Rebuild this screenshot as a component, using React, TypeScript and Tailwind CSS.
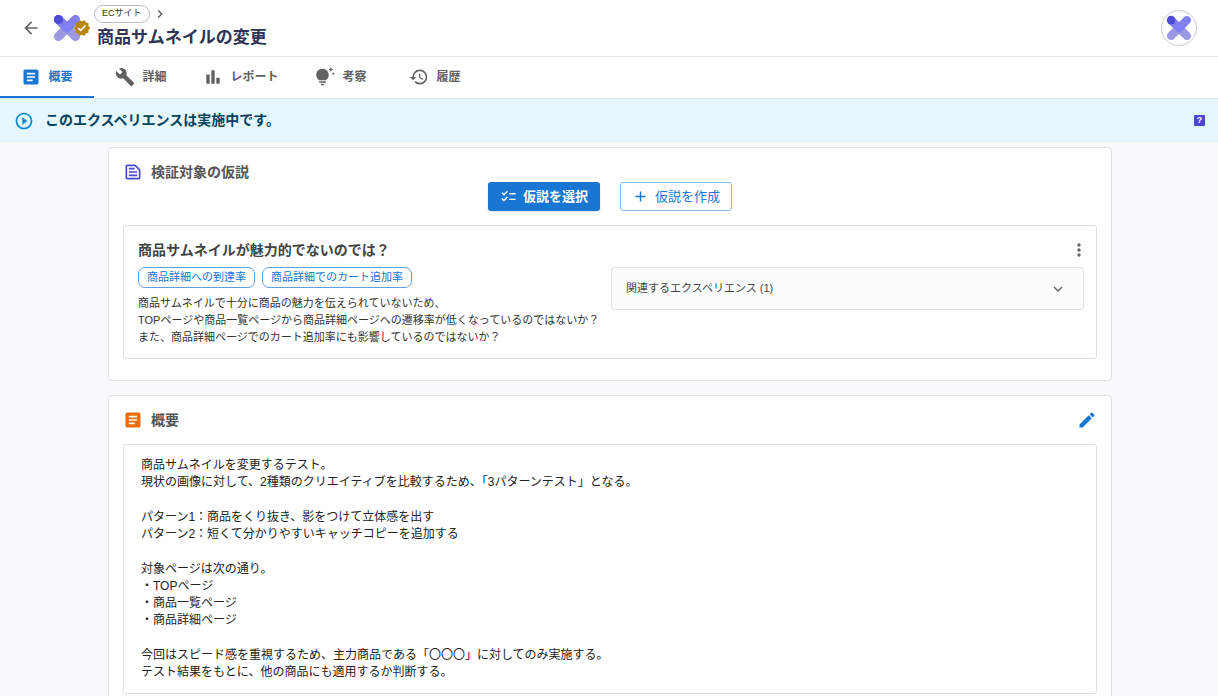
import { ReactNode, useState } from "react";
import {
  MdAdd, MdArrowBack, MdArticle, MdBarChart, MdBuild, MdChecklist, MdChevronRight, MdEdit, MdExpandMore,
  MdHistory, MdMoreVert, MdOutlineTextSnippet, MdPlayCircleOutline, MdTipsAndUpdates, MdVerified,
} from "react-icons/md";

const TABS = [
  { id: "overview", label: "概要", icon: MdArticle, className: "w-[94px]" },
  { id: "detail", label: "詳細", icon: MdBuild, className: "w-[94px]" },
  { id: "report", label: "レポート", icon: MdBarChart, className: "w-[106px]" },
  { id: "insight", label: "考察", icon: MdTipsAndUpdates, className: "w-[94px]" },
  { id: "history", label: "履歴", icon: MdHistory, className: "w-[94px]" },
];

const METRICS = ["商品詳細への到達率", "商品詳細でのカート追加率"];

const HYPOTHESIS = [
  "商品サムネイルで十分に商品の魅力を伝えられていないため、",
  "TOPページや商品一覧ページから商品詳細ページへの遷移率が低くなっているのではないか？",
  "また、商品詳細ページでのカート追加率にも影響しているのではないか？",
];

const OVERVIEW = [
  ["商品サムネイルを変更するテスト。", "現状の画像に対して、2種類のクリエイティブを比較するため、「3パターンテスト」となる。"],
  ["パターン1：商品をくり抜き、影をつけて立体感を出す", "パターン2：短くて分かりやすいキャッチコピーを追加する"],
  ["対象ページは次の通り。", "・TOPページ", "・商品一覧ページ", "・商品詳細ページ"],
  ["今回はスピード感を重視するため、主力商品である「〇〇〇」に対してのみ実施する。", "テスト結果をもとに、他の商品にも適用するか判断する。"],
];

function Logo({ className }: { className: string }) {
  return (
    <svg viewBox="0 0 28 28" fill="none" strokeWidth="9" strokeLinecap="round" className={className} aria-hidden="true">
      <path d="M5.5 22.5 14 14l8.5 8.5" stroke="#9a98e2" />
      <path d="M5.5 5.5 14 14l8.5-8.5" stroke="#8080f2" strokeLinejoin="round" />
      <circle cx="5.5" cy="5.5" r="4.6" fill="#4f4bd6" />
    </svg>
  );
}

function Card({ children }: { children: ReactNode }) {
  return <section className="rounded border border-[#e0e0e0] bg-white px-3.5 pt-3.5 pb-[21px]">{children}</section>;
}

export default function App() {
  const [tab, setTab] = useState("overview");
  const [open, setOpen] = useState(false);

  return (
    <div className="min-h-screen bg-[#f7f9fb] font-['Liberation_Sans','Noto_Sans_CJK_JP',sans-serif] text-[#333]">

      {/* Header */}
      <header className="flex h-[57px] items-center justify-between border-b border-[#e4e4e7] bg-white pr-[21px] pl-[21px]">
        <div className="flex items-center">
          <button aria-label="戻る" className="text-[#666]">
            <MdArrowBack className="h-5 w-5" />
          </button>
          <div className="relative ml-3 w-7">
            <Logo className="h-7 w-7" />
            <MdVerified className="absolute top-[5px] left-5 h-[18px] w-[18px] text-[#b8860b]" />
          </div>
          <div className="ml-[13px]">
            <div className="flex items-center gap-0.5">
              <span className="flex h-[18px] items-center rounded-full border border-[#bdbdbd] px-[7px] text-[9px]">ECサイト</span>
              <MdChevronRight className="h-4 w-4 text-[#555]" />
            </div>
            <h1 className="ml-[3px] pt-px text-[17px] leading-7 font-bold text-[#2e3556]">商品サムネイルの変更</h1>
          </div>
        </div>
        <button aria-label="アカウント" className="flex h-9 w-9 items-center justify-center rounded-full border border-[#c8c8d0] bg-white">
          <Logo className="h-[26px] w-[26px]" />
        </button>
      </header>

      {/* Tabs */}
      <nav role="tablist" className="flex h-[42px] border-b border-[#e0e4e8] bg-white">
        {TABS.map(({ id, label, icon: Icon, className }) => (
          <button
            key={id}
            role="tab"
            aria-selected={tab === id}
            onClick={() => setTab(id)}
            className={`${className} flex items-center justify-center gap-[7px] border-b-2 text-[12px] font-bold whitespace-nowrap ${
              tab === id ? "border-[#1976d2] text-[#1976d2]" : "border-transparent text-[#616161]"
            }`}
          >
            <Icon className="h-5 w-5 shrink-0" />
            {label}
          </button>
        ))}
      </nav>

      {/* Status */}
      <div className="flex h-[43px] items-center bg-[#e5f6fd] pr-[13px] pl-3.5 text-[#014361]">
        <MdPlayCircleOutline className="h-5 w-5 text-[#0288d1]" />
        <p className="ml-[11px] pb-0.5 text-[14px] leading-5 font-bold">このエクスペリエンスは実施中です。</p>
        <button aria-label="ヘルプ" className="ml-auto h-[11px] w-[11px] rounded-[1px] bg-[#4b48d0] text-center text-[9px] leading-[11px] font-bold text-white">?</button>
      </div>

      <main className="mx-auto flex max-w-[1006px] flex-col gap-3.5 pt-[5px] pb-5 pl-0.5">

        {/* Hypothesis */}
        <Card>
          <h2 className="flex items-center gap-2 text-[14px] leading-5 font-bold text-[#555]">
            <MdOutlineTextSnippet className="h-5 w-5 text-[#4b48d0]" />
            検証対象の仮説
          </h2>
          <div className="flex justify-center gap-5">
            <button className="flex h-[29px] w-28 items-center justify-center gap-1.5 rounded-[3px] bg-[#1976d2] text-[13px] font-bold text-white shadow">
              <MdChecklist className="h-[17px] w-[17px]" />
              仮説を選択
            </button>
            <button className="flex h-[29px] w-28 items-center justify-center gap-1.5 rounded-[3px] border border-[#8cbae8] text-[13px] text-[#1976d2]">
              <MdAdd className="h-[17px] w-[17px]" />
              仮説を作成
            </button>
          </div>

          <div className="mt-3.5 rounded-[3px] border border-[#e0e0e0] pt-3.5 pr-3 pb-3 pl-3.5">
            <div className="flex items-center justify-between">
              <h3 className="text-[14px] leading-5 font-bold text-[#444]">商品サムネイルが魅力的でないのでは？</h3>
              <button aria-label="メニュー" className="-mr-[5px] text-[#666]">
                <MdMoreVert className="h-5 w-5" />
              </button>
            </div>
            <div className="mt-[7px] grid grid-cols-2 items-start">
              <div>
                <div className="flex gap-[7px]">
                  {METRICS.map((m) => (
                    <span key={m} className="flex h-[21px] items-center rounded-[7px] border border-[#5f9fe0] px-2 text-[11px] whitespace-nowrap text-[#1976d2]">{m}</span>
                  ))}
                </div>
                <div className="mt-[7px] text-[11px] leading-[17px] whitespace-nowrap">
                  {HYPOTHESIS.map((line) => <p key={line}>{line}</p>)}
                </div>
              </div>
              <button
                aria-expanded={open}
                onClick={() => setOpen(!open)}
                className="flex h-[43px] items-center justify-between rounded-[3px] border border-[#dfe5e3] bg-[#fbfdfd] pr-4 pl-3.5 text-[11px] text-[#444]"
              >
                関連するエクスペリエンス (1)
                <MdExpandMore className="h-[18px] w-[18px] text-[#666]" />
              </button>
            </div>
          </div>
        </Card>

        {/* Overview */}
        <Card>
          <div className="flex items-center justify-between">
            <h2 className="flex items-center gap-2 text-[14px] leading-5 font-bold text-[#555]">
              <MdArticle className="h-5 w-5 text-[#ed6c02]" />
              概要
            </h2>
            <button aria-label="編集" className="text-[#1976d2]">
              <MdEdit className="h-5 w-5" />
            </button>
          </div>
          <div className="mt-3.5 flex flex-col gap-[18px] rounded-[3px] border border-[#e0e0e0] px-[17px] pt-3 pb-3 text-[12px] leading-[17px] text-[#222]">
            {OVERVIEW.map((lines) => (
              <div key={lines[0]}>
                {lines.map((line) => <p key={line}>{line}</p>)}
              </div>
            ))}
          </div>
        </Card>
      </main>
    </div>
  );
}
